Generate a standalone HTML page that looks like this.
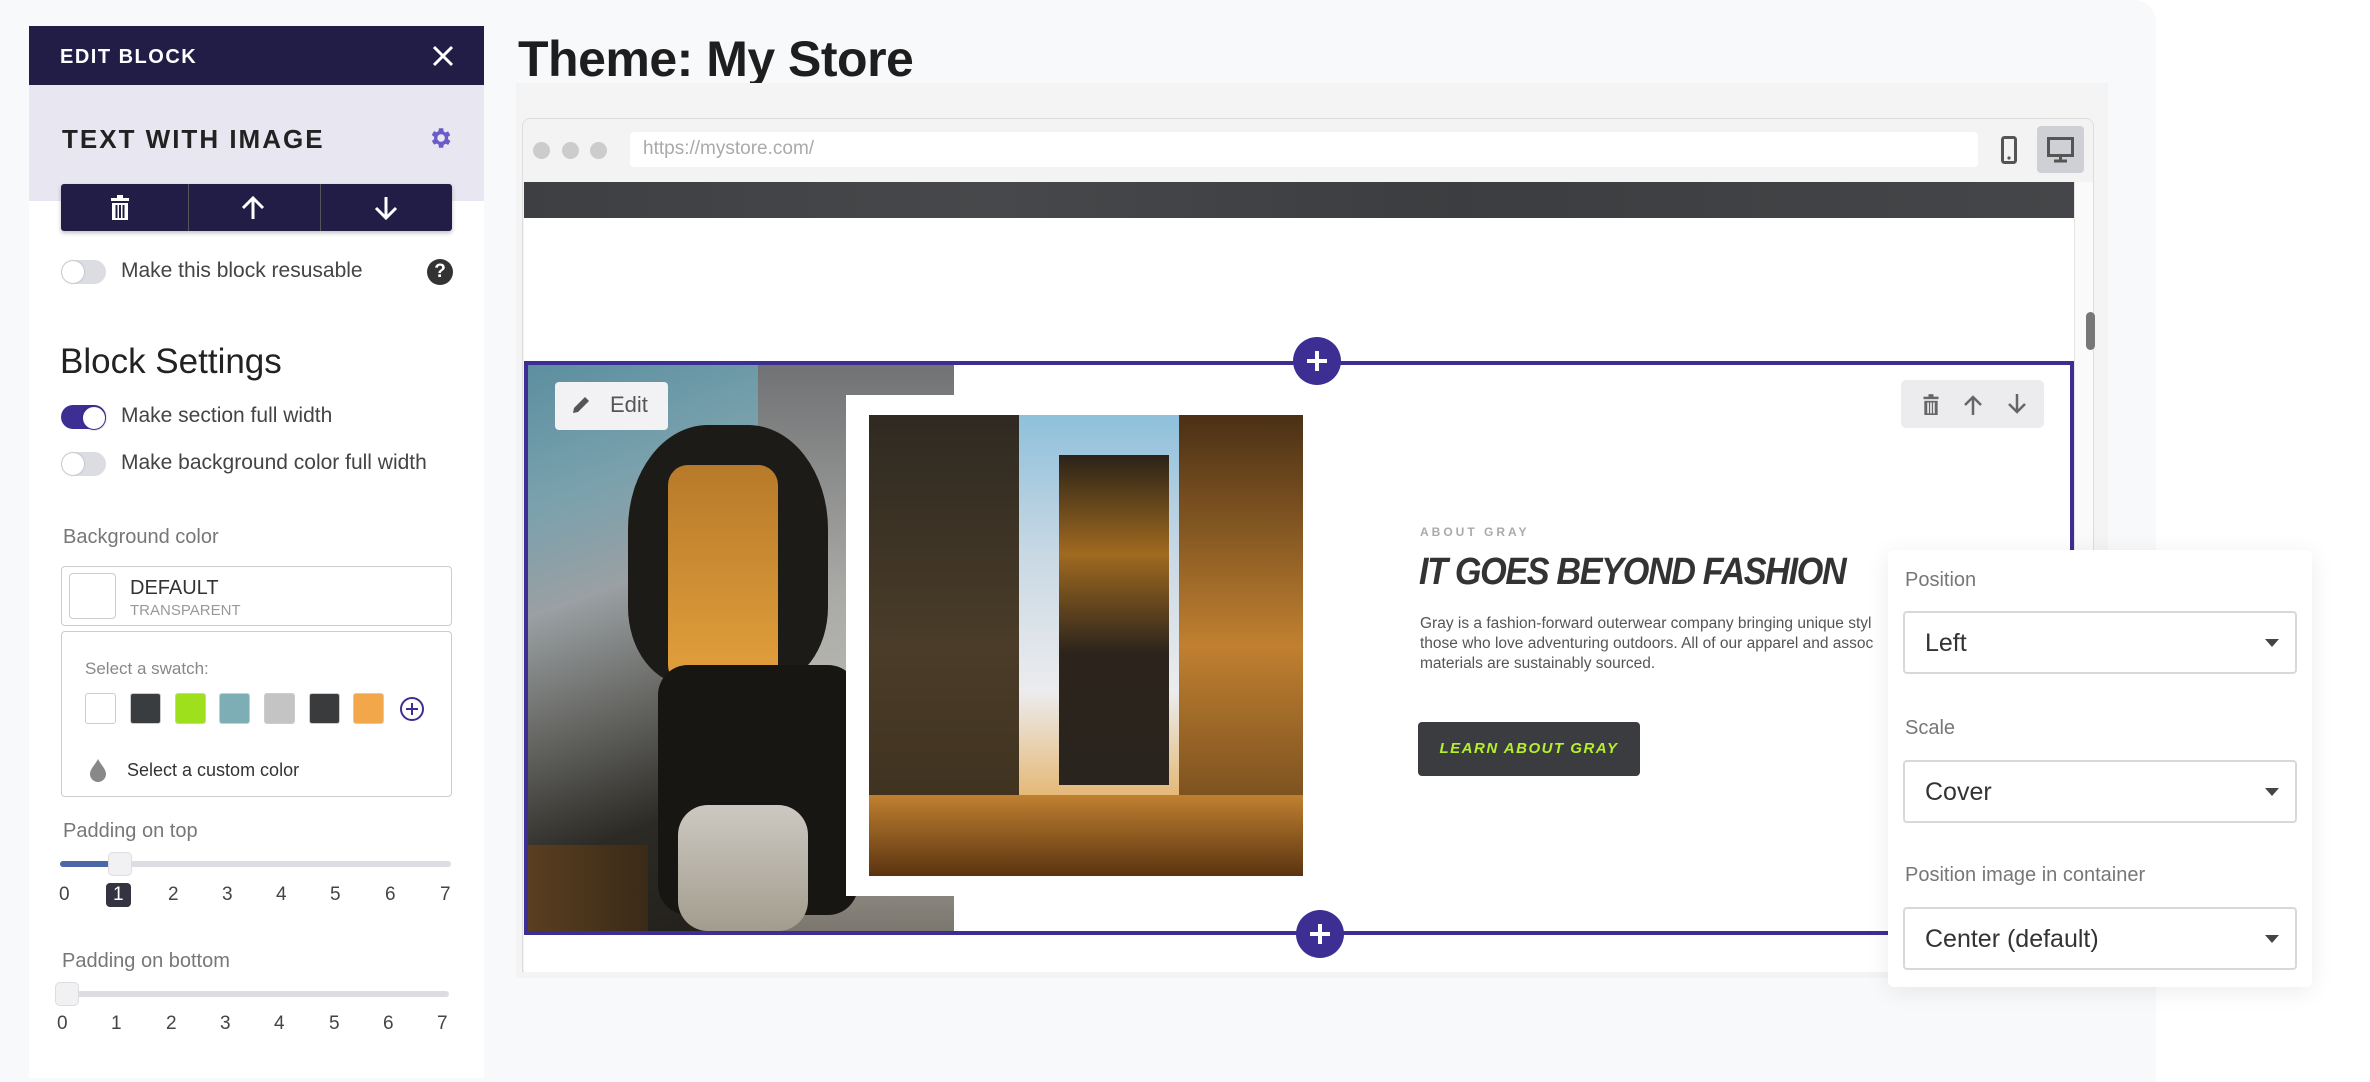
<!DOCTYPE html>
<html><head><meta charset="utf-8"><style>
*{box-sizing:border-box;margin:0;padding:0}
body{width:2370px;height:1082px;background:#fff;position:relative;overflow:hidden;font-family:"Liberation Sans",sans-serif;color:#333}
.a{position:absolute}
.tog{position:absolute;width:45px;height:24px;border-radius:12px;background:#dcdde2}
.tog::after{content:"";position:absolute;left:1px;top:1px;width:22px;height:22px;border-radius:50%;background:#fff;box-shadow:0 0 2px rgba(0,0,0,.25)}
.tog.on{background:#3d2e94}.tog.on::after{left:21px;border:1px solid #3d2e94}
.lbl{position:absolute;font-size:21px;color:#444}
.sw{position:absolute;top:693px;width:31px;height:31px;border-radius:3px;border:1px solid #ccc}
.num{position:absolute;font-size:19px;color:#444}
.sel{position:absolute;left:1903px;width:394px;height:63px;border:2px solid #d8d8dc;border-radius:4px;background:#fff;font-size:25px;color:#333;padding:16px 0 0 20px}
.sel::after{content:"";position:absolute;right:16px;top:26px;border-left:7px solid transparent;border-right:7px solid transparent;border-top:8px solid #444}
.slbl{position:absolute;left:1905px;font-size:20px;color:#777}
</style></head><body>
<div class="a" style="left:0;top:0;width:2156px;height:1082px;background:#f8f9fb;border-radius:0 22px 0 0"></div>
<div class="a" style="left:29px;top:26px;width:455px;height:1052px;background:#fff"></div>
<div class="a" style="left:29px;top:26px;width:455px;height:59px;background:#221d47"></div>
<div class="a" style="left:60px;top:46px;color:#fff;font-size:20px;font-weight:bold;letter-spacing:1.5px">EDIT BLOCK</div>
<svg class="a" style="left:432px;top:45px" width="22" height="22"><path d="M2 2L20 20M20 2L2 20" stroke="#fff" stroke-width="3"/></svg>
<div class="a" style="left:29px;top:85px;width:455px;height:116px;background:#e8e7f1"></div>
<div class="a" style="left:62px;top:124px;color:#222;font-size:26px;font-weight:bold;letter-spacing:2px">TEXT WITH IMAGE</div>
<svg class="a" style="left:427px;top:125px" width="26" height="26" viewBox="0 0 24 24"><path fill="#6b5bc9" d="M19.4 13a7.5 7.5 0 0 0 0-2l2.1-1.6-2-3.5-2.5 1a7.6 7.6 0 0 0-1.7-1L15 3h-4l-.4 2.7a7.6 7.6 0 0 0-1.7 1l-2.5-1-2 3.5L6.6 11a7.5 7.5 0 0 0 0 2l-2.1 1.6 2 3.5 2.5-1c.5.4 1.1.7 1.7 1L11 21h4l.4-2.7c.6-.3 1.2-.6 1.7-1l2.5 1 2-3.5zM13 15.5A3.5 3.5 0 1 1 13 8.5a3.5 3.5 0 0 1 0 7z"/></svg>
<div class="a" style="left:61px;top:184px;width:391px;height:47px;background:#221d47;border-radius:3px;box-shadow:0 2px 4px rgba(0,0,0,.25)"></div>
<div class="a" style="left:188px;top:184px;width:1px;height:47px;background:#555"></div>
<div class="a" style="left:320px;top:184px;width:1px;height:47px;background:#555"></div>
<svg class="a" style="left:108px;top:195px" width="24" height="26" viewBox="0 0 24 26"><rect x="3" y="3" width="18" height="3" fill="#fff"/><rect x="9" y="0" width="6" height="4" fill="#fff"/><path d="M4 8h16v17H4z" fill="#fff"/><path d="M8.5 10v13M12 10v13M15.5 10v13" stroke="#221d47" stroke-width="2"/></svg>
<svg class="a" style="left:240px;top:195px" width="26" height="26"><path d="M13 24V3M3 13L13 3l10 10" stroke="#fff" stroke-width="3" fill="none"/></svg>
<svg class="a" style="left:373px;top:195px" width="26" height="26"><path d="M13 2v21M3 13l10 10 10-10" stroke="#fff" stroke-width="3" fill="none"/></svg>
<div class="tog" style="left:61px;top:260px"></div>
<div class="lbl" style="left:121px;top:259px">Make this block resusable</div>
<div class="a" style="left:427px;top:259px;width:26px;height:26px;border-radius:50%;background:#333;color:#fff;font-weight:bold;font-size:19px;text-align:center;line-height:26px">?</div>
<div class="a" style="left:60px;top:342px;font-size:35px;color:#222">Block Settings</div>
<div class="tog on" style="left:61px;top:405px"></div>
<div class="lbl" style="left:121px;top:404px">Make section full width</div>
<div class="tog" style="left:61px;top:452px"></div>
<div class="lbl" style="left:121px;top:451px">Make background color full width</div>
<div class="a" style="left:63px;top:526px;font-size:20px;color:#777">Background color</div>
<div class="a" style="left:61px;top:566px;width:391px;height:60px;border:1.5px solid #ccc;border-radius:4px"></div>
<div class="a" style="left:69px;top:573px;width:47px;height:46px;border:1.5px solid #ccc;border-radius:4px"></div>
<div class="a" style="left:130px;top:577px;font-size:20px;color:#333">DEFAULT</div>
<div class="a" style="left:130px;top:602px;font-size:15px;color:#999">TRANSPARENT</div>
<div class="a" style="left:61px;top:631px;width:391px;height:166px;border:1.5px solid #ccc;border-radius:4px"></div>
<div class="a" style="left:85px;top:659px;font-size:17px;color:#888">Select a swatch:</div>
<div class="sw" style="left:85px;background:#fff"></div>
<div class="sw" style="left:130px;background:#3a3d40"></div>
<div class="sw" style="left:175px;background:#9ee01c"></div>
<div class="sw" style="left:219px;background:#7eaeb5"></div>
<div class="sw" style="left:264px;background:#c4c4c4"></div>
<div class="sw" style="left:309px;background:#3a3b3c"></div>
<div class="sw" style="left:353px;background:#f2a74a"></div>
<svg class="a" style="left:399px;top:696px" width="26" height="26"><circle cx="13" cy="13" r="11" fill="none" stroke="#3d2e94" stroke-width="2"/><path d="M13 7v12M7 13h12" stroke="#3d2e94" stroke-width="2"/></svg>
<svg class="a" style="left:88px;top:758px" width="20" height="24"><path d="M10 1C7 7 2 11 2 16a8 8 0 0 0 16 0c0-5-5-9-8-15z" fill="#888"/></svg>
<div class="a" style="left:127px;top:760px;font-size:18px;color:#333">Select a custom color</div>
<div class="a" style="left:63px;top:820px;font-size:20px;color:#777">Padding on top</div>
<div class="a" style="left:60px;top:861px;width:391px;height:6px;border-radius:3px;background:#dcdde2"></div>
<div class="a" style="left:60px;top:861px;width:50px;height:6px;border-radius:3px;background:#4a68a8"></div>
<div class="a" style="left:108px;top:852px;width:24px;height:24px;border-radius:5px;background:#f1f1f4;border:1px solid #ddd"></div>
<div class="a" style="left:106px;top:883px;width:25px;height:24px;border-radius:4px;background:#333342"></div>
<div class="num" style="left:59px;top:884px">0</div><div class="num" style="left:113px;top:884px;color:#fff">1</div><div class="num" style="left:168px;top:884px">2</div><div class="num" style="left:222px;top:884px">3</div><div class="num" style="left:276px;top:884px">4</div><div class="num" style="left:330px;top:884px">5</div><div class="num" style="left:385px;top:884px">6</div><div class="num" style="left:440px;top:884px">7</div>
<div class="a" style="left:62px;top:950px;font-size:20px;color:#777">Padding on bottom</div>
<div class="a" style="left:58px;top:991px;width:391px;height:6px;border-radius:3px;background:#dcdde2"></div>
<div class="a" style="left:55px;top:982px;width:24px;height:24px;border-radius:5px;background:#f1f1f4;border:1px solid #ddd"></div>
<div class="num" style="left:57px;top:1013px">0</div><div class="num" style="left:111px;top:1013px">1</div><div class="num" style="left:166px;top:1013px">2</div><div class="num" style="left:220px;top:1013px">3</div><div class="num" style="left:274px;top:1013px">4</div><div class="num" style="left:329px;top:1013px">5</div><div class="num" style="left:383px;top:1013px">6</div><div class="num" style="left:437px;top:1013px">7</div>

<div class="a" style="left:518px;top:30px;font-size:50px;font-weight:bold;color:#1e1e1e;letter-spacing:-0.5px">Theme: My Store</div>
<div class="a" style="left:516px;top:83px;width:1592px;height:895px;background:#f4f4f5"></div>
<div class="a" style="left:522px;top:118px;width:1572px;height:854px;background:#f3f3f3;border:1.5px solid #ddd;border-radius:8px 8px 0 0"></div>
<div class="a" style="left:533px;top:142px;width:17px;height:17px;border-radius:50%;background:#ccc"></div>
<div class="a" style="left:562px;top:142px;width:17px;height:17px;border-radius:50%;background:#ccc"></div>
<div class="a" style="left:590px;top:142px;width:17px;height:17px;border-radius:50%;background:#ccc"></div>
<div class="a" style="left:630px;top:132px;width:1348px;height:35px;background:#fff;border-radius:4px"></div>
<div class="a" style="left:643px;top:138px;font-size:19px;color:#aaa">https://mystore.com/</div>
<svg class="a" style="left:2001px;top:136px" width="16" height="28"><rect x="1.5" y="1.5" width="13" height="25" rx="2" fill="none" stroke="#555" stroke-width="3"/><circle cx="8" cy="22" r="1.6" fill="#555"/></svg>
<div class="a" style="left:2037px;top:126px;width:47px;height:47px;border-radius:4px;background:#cfd0d6"></div>
<svg class="a" style="left:2047px;top:137px" width="27" height="26"><rect x="1.5" y="1.5" width="24" height="17" fill="none" stroke="#555" stroke-width="3"/><path d="M13.5 18v5M7 24h13" stroke="#555" stroke-width="3"/></svg>
<div class="a" style="left:524px;top:182px;width:1550px;height:790px;background:#fff"></div>
<div class="a" style="left:524px;top:182px;width:1550px;height:36px;background:linear-gradient(90deg,#3d3f42,#46484b 30%,#3b3d40 60%,#444649)"></div>
<div class="a" style="left:2074px;top:182px;width:19px;height:790px;background:#fafafa;border-left:1px solid #e4e4e4"></div>
<div class="a" style="left:2086px;top:312px;width:9px;height:38px;border-radius:5px;background:#777"></div>
<div class="a" style="left:524px;top:361px;width:1550px;height:574px;border:4px solid #3d2e94"></div>
<div class="a" style="left:528px;top:365px;width:426px;height:566px;overflow:hidden;background:#2a2620">
 <div class="a" style="left:0;top:0;width:426px;height:566px;background:linear-gradient(160deg,#5c8fa0 0%,#7aa1ad 20%,#9aa0a3 35%,#6e6f6c 50%,#2c2a25 70%,#1e1b16 100%)"></div>
 <div class="a" style="left:230px;top:0;width:196px;height:566px;background:linear-gradient(180deg,#707274,#a9aaa6 40%,#bfbdb8 70%,#7b776f)"></div>
 <div class="a" style="left:100px;top:60px;width:200px;height:260px;border-radius:40% 40% 30% 30%;background:#1d1b18"></div>
 <div class="a" style="left:140px;top:100px;width:110px;height:220px;background:linear-gradient(180deg,#b77a2a,#e3a03c);border-radius:20px"></div>
 <div class="a" style="left:130px;top:300px;width:200px;height:250px;background:#181612;border-radius:30px"></div>
 <div class="a" style="left:150px;top:440px;width:130px;height:126px;background:linear-gradient(180deg,#ccc9c2,#a39c8e);border-radius:30px"></div>
 <div class="a" style="left:0;top:480px;width:120px;height:86px;background:linear-gradient(90deg,#5a3f20,#3a2a18)"></div>
</div>
<div class="a" style="left:846px;top:395px;width:476px;height:501px;background:#fff"></div>
<div class="a" style="left:869px;top:415px;width:434px;height:461px;overflow:hidden;background:linear-gradient(180deg,#8ec0db 0%,#c8d8e4 30%,#ececee 60%,#e4b36a 85%,#6a3c10 100%)">
 <div class="a" style="left:0;top:0;width:150px;height:461px;background:linear-gradient(180deg,#2f2a22,#4a3c28 50%,#3a2e1c)"></div>
 <div class="a" style="left:310px;top:0;width:124px;height:461px;background:linear-gradient(180deg,#4a3015,#c08030 50%,#5a3a18)"></div>
 <div class="a" style="left:190px;top:40px;width:110px;height:330px;background:linear-gradient(180deg,#2a2218,#a06a20 30%,#2c241c 60%,#2a241e)"></div>
 <div class="a" style="left:0;top:380px;width:434px;height:81px;background:linear-gradient(180deg,#c08030,#5a3410)"></div>
</div>
<div class="a" style="left:555px;top:382px;width:113px;height:48px;background:#f2f2f4;border-radius:4px"></div>
<svg class="a" style="left:570px;top:394px" width="22" height="22"><path d="M3 19l1-5L15 3l4 4L8 18z" fill="#555"/></svg>
<div class="a" style="left:610px;top:392px;font-size:22px;color:#555">Edit</div>
<div class="a" style="left:1901px;top:380px;width:143px;height:48px;background:#ececef;border-radius:5px"></div>
<svg class="a" style="left:1921px;top:394px" width="20" height="22" viewBox="0 0 24 26"><rect x="3" y="3" width="18" height="3" fill="#666"/><rect x="9" y="0" width="6" height="4" fill="#666"/><path d="M4 8h16v17H4z" fill="#666"/><path d="M8.5 10v13M12 10v13M15.5 10v13" stroke="#ececef" stroke-width="2"/></svg>
<svg class="a" style="left:1962px;top:394px" width="22" height="22"><path d="M11 21V3M3 11l8-8 8 8" stroke="#666" stroke-width="2.5" fill="none"/></svg>
<svg class="a" style="left:2006px;top:393px" width="22" height="22"><path d="M11 1v18M3 11l8 8 8-8" stroke="#666" stroke-width="2.5" fill="none"/></svg>
<div class="a" style="left:1293px;top:337px;width:48px;height:48px;border-radius:50%;background:#3d2e94"></div>
<svg class="a" style="left:1305px;top:349px" width="24" height="24"><path d="M12 2v20M2 12h20" stroke="#fff" stroke-width="4"/></svg>
<div class="a" style="left:1296px;top:910px;width:48px;height:48px;border-radius:50%;background:#3d2e94"></div>
<svg class="a" style="left:1308px;top:922px" width="24" height="24"><path d="M12 2v20M2 12h20" stroke="#fff" stroke-width="4"/></svg>
<div class="a" style="left:1420px;top:525px;font-size:12px;font-weight:bold;letter-spacing:3px;color:#aaa">ABOUT GRAY</div>
<div class="a" style="left:1419px;top:551px;font-size:38px;font-weight:bold;font-style:italic;color:#333;letter-spacing:-1.5px;transform:scaleX(0.9);transform-origin:left">IT GOES BEYOND FASHION</div>
<div class="a" style="left:1420px;top:614px;width:470px;font-size:15.5px;line-height:20px;color:#555;white-space:nowrap;overflow:hidden">Gray is a fashion-forward outerwear company bringing unique styl<br>those who love adventuring outdoors. All of our apparel and assoc<br>materials are sustainably sourced.</div>
<div class="a" style="left:1418px;top:722px;height:54px;width:222px;background:#3a3c40;border-radius:4px;color:#b6f02a;font-size:15px;font-weight:bold;font-style:italic;letter-spacing:1.5px;text-align:center;line-height:54px">LEARN ABOUT GRAY</div>
<div class="a" style="left:1888px;top:550px;width:424px;height:437px;background:#fff;border-radius:6px;box-shadow:0 4px 24px rgba(0,0,0,.08)"></div>
<div class="slbl" style="top:569px">Position</div>
<div class="sel" style="top:611px">Left</div>
<div class="slbl" style="top:717px">Scale</div>
<div class="sel" style="top:760px">Cover</div>
<div class="slbl" style="top:864px">Position image in container</div>
<div class="sel" style="top:907px">Center (default)</div>
</body></html>
